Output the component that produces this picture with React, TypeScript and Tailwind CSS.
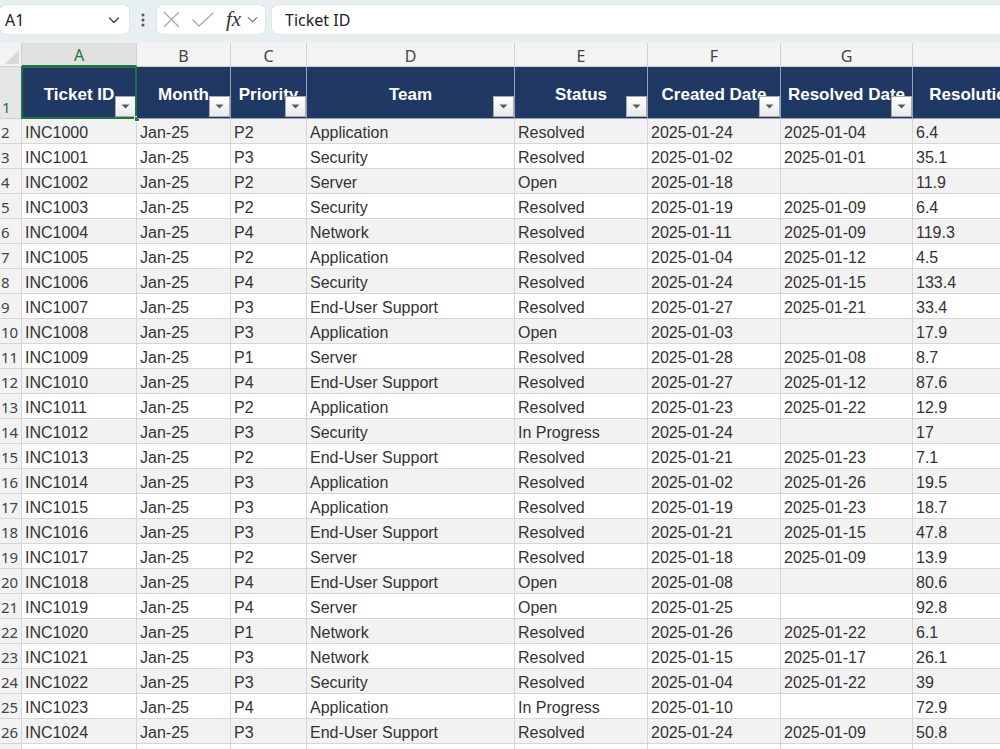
import React from "react";

const COLS = [
  { key: "A", w: 115, title: "Ticket ID" },
  { key: "B", w: 94, title: "Month" },
  { key: "C", w: 76, title: "Priority" },
  { key: "D", w: 208, title: "Team" },
  { key: "E", w: 133, title: "Status" },
  { key: "F", w: 133, title: "Created Date" },
  { key: "G", w: 132, title: "Resolved Date" },
  { key: "H", w: 208, title: "Resolution Time (hrs)" },
];

const ROWS: string[][] = [
  ["INC1000", "Jan-25", "P2", "Application", "Resolved", "2025-01-24", "2025-01-04", "6.4"],
  ["INC1001", "Jan-25", "P3", "Security", "Resolved", "2025-01-02", "2025-01-01", "35.1"],
  ["INC1002", "Jan-25", "P2", "Server", "Open", "2025-01-18", "", "11.9"],
  ["INC1003", "Jan-25", "P2", "Security", "Resolved", "2025-01-19", "2025-01-09", "6.4"],
  ["INC1004", "Jan-25", "P4", "Network", "Resolved", "2025-01-11", "2025-01-09", "119.3"],
  ["INC1005", "Jan-25", "P2", "Application", "Resolved", "2025-01-04", "2025-01-12", "4.5"],
  ["INC1006", "Jan-25", "P4", "Security", "Resolved", "2025-01-24", "2025-01-15", "133.4"],
  ["INC1007", "Jan-25", "P3", "End-User Support", "Resolved", "2025-01-27", "2025-01-21", "33.4"],
  ["INC1008", "Jan-25", "P3", "Application", "Open", "2025-01-03", "", "17.9"],
  ["INC1009", "Jan-25", "P1", "Server", "Resolved", "2025-01-28", "2025-01-08", "8.7"],
  ["INC1010", "Jan-25", "P4", "End-User Support", "Resolved", "2025-01-27", "2025-01-12", "87.6"],
  ["INC1011", "Jan-25", "P2", "Application", "Resolved", "2025-01-23", "2025-01-22", "12.9"],
  ["INC1012", "Jan-25", "P3", "Security", "In Progress", "2025-01-24", "", "17"],
  ["INC1013", "Jan-25", "P2", "End-User Support", "Resolved", "2025-01-21", "2025-01-23", "7.1"],
  ["INC1014", "Jan-25", "P3", "Application", "Resolved", "2025-01-02", "2025-01-26", "19.5"],
  ["INC1015", "Jan-25", "P3", "Application", "Resolved", "2025-01-19", "2025-01-23", "18.7"],
  ["INC1016", "Jan-25", "P3", "End-User Support", "Resolved", "2025-01-21", "2025-01-15", "47.8"],
  ["INC1017", "Jan-25", "P2", "Server", "Resolved", "2025-01-18", "2025-01-09", "13.9"],
  ["INC1018", "Jan-25", "P4", "End-User Support", "Open", "2025-01-08", "", "80.6"],
  ["INC1019", "Jan-25", "P4", "Server", "Open", "2025-01-25", "", "92.8"],
  ["INC1020", "Jan-25", "P1", "Network", "Resolved", "2025-01-26", "2025-01-22", "6.1"],
  ["INC1021", "Jan-25", "P3", "Network", "Resolved", "2025-01-15", "2025-01-17", "26.1"],
  ["INC1022", "Jan-25", "P3", "Security", "Resolved", "2025-01-04", "2025-01-22", "39"],
  ["INC1023", "Jan-25", "P4", "Application", "In Progress", "2025-01-10", "", "72.9"],
  ["INC1024", "Jan-25", "P3", "End-User Support", "Resolved", "2025-01-24", "2025-01-09", "50.8"],
];

const uiFont = { fontFamily: '"Noto Sans", "Open Sans", sans-serif' };

function Chevron({ size = 16, color = "#444" }: { size?: number; color?: string }) {
  return (
    <svg width={size} height={size} viewBox="0 0 16 16" fill="none">
      <path d="M3.5 6 L8 10.5 L12.5 6" stroke={color} strokeWidth="1.3" strokeLinecap="round" strokeLinejoin="round" />
    </svg>
  );
}

function FilterButton() {
  return (
    <div className="absolute right-0 bottom-[1px] w-[21px] h-[21px] border border-[#a9a9a9] bg-gradient-to-b from-[#ffffff] to-[#e9e9e9] flex items-center justify-center">
      <svg width="9" height="5" viewBox="0 0 9 5">
        <path d="M0.5 0.5 L8.5 0.5 L4.5 4.5 Z" fill="#5a5a5a" />
      </svg>
    </div>
  );
}

export default function App() {
  return (
    <div className="w-[1000px] h-[749px] overflow-hidden bg-white flex flex-col" style={{ fontFamily: '"Liberation Sans", Arial, sans-serif' }}>
      {/* Formula bar */}
      <div className="h-[43px] shrink-0 bg-[#e8eff0] flex items-start pt-[5px]">
        <div className="w-[129px] h-[29px] bg-white rounded-[6px] flex items-center justify-between pl-[5px] pr-[7px] shadow-[0_0_0_1px_#e1e6e7]">
          <span className="text-[16px] text-[#222]" style={uiFont}>A1</span>
          <Chevron size={16} color="#444" />
        </div>
        <div className="w-[28px] h-[29px] flex items-center justify-center">
          <svg width="4" height="16" viewBox="0 0 4 16">
            <circle cx="2" cy="3" r="1.5" fill="#555" />
            <circle cx="2" cy="8" r="1.5" fill="#555" />
            <circle cx="2" cy="13" r="1.5" fill="#555" />
          </svg>
        </div>
        <div className="w-[108px] h-[29px] bg-white rounded-[6px] flex items-center pl-[6px] shadow-[0_0_0_1px_#e1e6e7]">
          <svg width="17" height="17" viewBox="0 0 17 17" fill="none">
            <path d="M1.5 1.5 L15.5 15.5 M15.5 1.5 L1.5 15.5" stroke="#a8a8a8" strokeWidth="1.3" strokeLinecap="round" />
          </svg>
          <svg width="24" height="17" viewBox="0 0 24 17" fill="none" className="ml-[11px]">
            <path d="M2 9 L8 15 L22 2" stroke="#a8a8a8" strokeWidth="1.3" strokeLinecap="round" strokeLinejoin="round" />
          </svg>
          <span className="ml-[11px] text-[21px] italic text-[#333] leading-none" style={{ fontFamily: '"Liberation Serif", "Times New Roman", serif' }}>
            fx
          </span>
          <div className="ml-[4px]">
            <Chevron size={15} color="#777" />
          </div>
        </div>
        <div className="ml-[7px] flex-1 h-[29px] bg-white rounded-l-[6px] flex items-center pl-[13px] shadow-[0_0_0_1px_#e1e6e7]">
          <span className="text-[16px] text-[#222]" style={uiFont}>Ticket ID</span>
        </div>
      </div>

      {/* Column headers */}
      <div className="h-[24px] shrink-0 flex bg-[#f3f3f3]">
        <div className="w-[22px] shrink-0 h-full border-r border-b border-[#d0d0d0] relative bg-[#f3f3f3]">
          <svg width="14" height="14" viewBox="0 0 14 14" className="absolute right-[2px] bottom-[2px]">
            <path d="M14 0 L14 14 L0 14 Z" fill="#d8d8d8" />
          </svg>
        </div>
        {COLS.map((c) => (
          <div
            key={c.key}
            className={
              c.key === "A"
                ? "shrink-0 h-full border-r border-[#d0d0d0] border-b-2 border-b-[#217346] bg-[#e1e1e1] flex items-center justify-center pt-[2px] text-[16px] text-[#217346]"
                : "shrink-0 h-full border-r border-b border-[#d0d0d0] flex items-center justify-center pt-[2px] text-[16px] text-[#444]"
            }
            style={{ width: c.w, ...uiFont }}
          >
            {c.key}
          </div>
        ))}
      </div>

      {/* Header row 1 */}
      <div className="h-[52px] shrink-0 flex">
        <div className="w-[22px] shrink-0 h-full bg-[#e6e6e6] border-r border-b border-[#d0d0d0] flex items-end pl-[2px] text-[15px] text-[#217346]" style={uiFont}>
          1
        </div>
        {COLS.map((c) => (
          <div
            key={c.key}
            className="shrink-0 h-full relative bg-[#1f3864] border-r border-b border-[#97a3b6] flex items-center justify-center pt-[4px]"
            style={{ width: c.w }}
          >
            <span className="text-[17px] font-bold text-white whitespace-nowrap">{c.title}</span>
            <FilterButton />
            {c.key === "A" && (
              <>
                <div className="absolute -left-[1px] -top-[1px] -right-[1px] -bottom-[1px] border-2 border-[#217346] pointer-events-none" />
                <div className="absolute -right-[4px] -bottom-[4px] w-[6px] h-[6px] bg-[#217346] border border-white" />
              </>
            )}
          </div>
        ))}
      </div>

      {/* Data rows */}
      <div className="flex flex-col">
        {ROWS.map((r, i) => {
          const rowNum = i + 2;
          const gray = rowNum % 2 === 0;
          return (
            <div key={i} className={gray ? "h-[25px] shrink-0 flex bg-[#f2f2f2]" : "h-[25px] shrink-0 flex bg-white"}>
              <div className="w-[22px] shrink-0 h-full bg-[#f2f2f2] border-r border-b border-[#d4d4d4] flex items-center pl-[1px] pt-[3px] text-[15px] text-[#444] overflow-hidden whitespace-nowrap" style={uiFont}>
                {rowNum}
              </div>
              {COLS.map((c, j) => (
                <div
                  key={c.key}
                  className="shrink-0 h-full border-r border-b border-[#d6d6d6] flex items-center pl-[3px] pt-[3px] text-[16px] text-[#333] whitespace-nowrap overflow-hidden"
                  style={{ width: c.w }}
                >
                  {r[j]}
                </div>
              ))}
            </div>
          );
        })}
        <div className="h-[25px] shrink-0 flex bg-white">
          <div className="w-[22px] shrink-0 h-full bg-[#f2f2f2] border-r border-[#d4d4d4]" />
          {COLS.map((c) => (
            <div key={c.key} className="shrink-0 h-full border-r border-[#d6d6d6]" style={{ width: c.w }} />
          ))}
        </div>
      </div>
    </div>
  );
}
